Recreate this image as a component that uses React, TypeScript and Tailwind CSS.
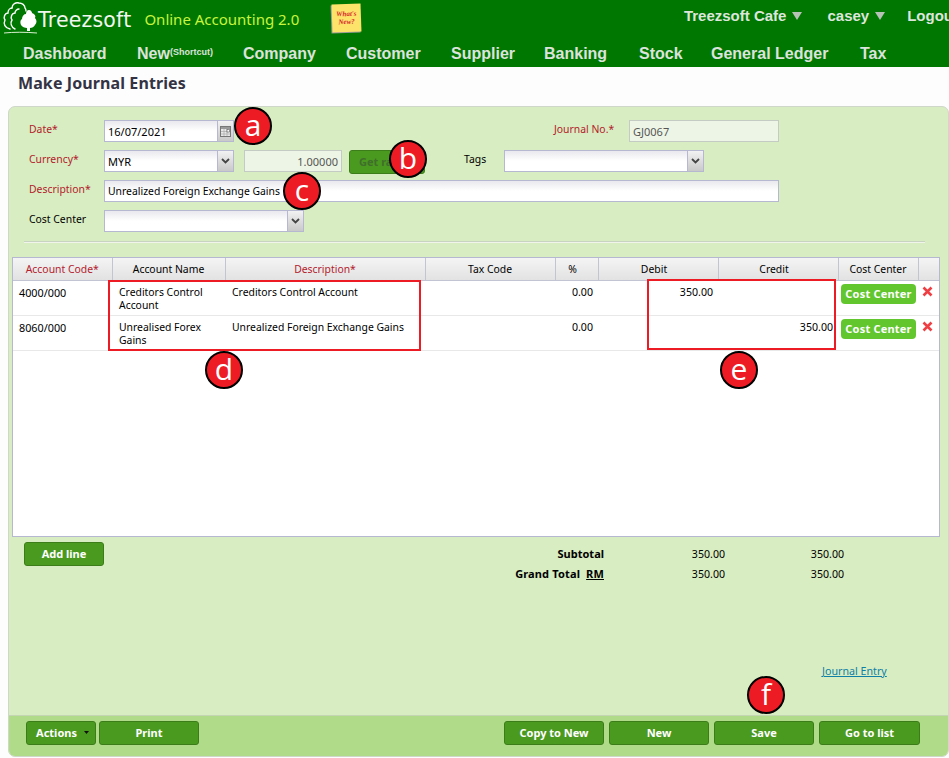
import React from "react";

const ui = "font-['Noto_Sans','Open_Sans',sans-serif]";

function Badge({ ch, className }: { ch: string; className: string }) {
  return (
    <div className={`absolute flex h-[38px] w-[38px] items-center justify-center rounded-full border-2 border-black bg-[#ed1c24] font-['Open_Sans',sans-serif] text-[30px] leading-none text-white ${className}`}>
      <span className="-mt-[3px]">{ch}</span>
    </div>
  );
}

function Input({ w, value, disabled, right, small }: { w: string; value?: string; disabled?: boolean; right?: boolean; small?: boolean }) {
  const base = disabled
    ? "border-[#c4cbc4] bg-[#edf5e6] text-[#555]"
    : "border-[#b5b8d0] bg-gradient-to-b from-[#e9e9ee] via-white to-white text-black";
  return (
    <div className={`flex h-[22px] items-center border px-[3px] ${small ? "pt-[1px] text-[10.4px]" : "text-[11px]"} ${w} ${base} ${right ? "justify-end" : ""}`}>
      {value}
    </div>
  );
}

function Select({ w, value, cal }: { w: string; value?: string; cal?: boolean }) {
  return (
    <div className={`flex h-[22px] border border-[#b5b8d0] bg-gradient-to-b from-[#e9e9ee] via-white to-white text-[11px] text-black ${w}`}>
      <div className="flex flex-1 items-center px-[3px]">{value}</div>
      <div className="flex w-[16px] items-center justify-center border-l border-[#b5b8d0] bg-gradient-to-b from-[#f2f2f2] to-[#c9c9c9]">
        {cal ? (
          <svg width="11" height="11" viewBox="0 0 11 11">
            <rect x="0.5" y="0.5" width="10" height="10" fill="#e8e8e8" stroke="#777" />
            <rect x="1" y="1" width="9" height="2" fill="#999" />
            <path d="M1 5.5h9M1 8h9M4 3v7M7 3v7" stroke="#aaa" strokeWidth="0.7" />
            <rect x="7" y="3.500" width="2.500" height="2.500" fill="#fff" stroke="#555" strokeWidth="0.6" />
          </svg>
        ) : (
          <svg width="9" height="6" viewBox="0 0 9 6">
            <path d="M1 1l3.500 3.500L8 1" fill="none" stroke="#444" strokeWidth="1.8" />
          </svg>
        )}
      </div>
    </div>
  );
}

function Btn({ children, className = "" }: { children: React.ReactNode; className?: string }) {
  return (
    <div className={`flex h-[24px] items-center justify-center rounded-[3px] border border-[#3c7d1a] bg-[#4b9a20] pb-[2px] text-[11px] font-bold text-white ${className}`}>
      {children}
    </div>
  );
}

const nav: [string, string][] = [
  ["Dashboard", "w-[114px]"],
  ["New", "w-[106px]"],
  ["Company", "w-[103px]"],
  ["Customer", "w-[105px]"],
  ["Supplier", "w-[93px]"],
  ["Banking", "w-[95px]"],
  ["Stock", "w-[72px]"],
  ["General Ledger", "w-[149px]"],
  ["Tax", "w-[30px]"],
];

const Th = ({ children, className = "" }: { children?: React.ReactNode; className?: string }) => (
  <th className={`h-[22px] border-r border-b border-[#c2c4d4] bg-gradient-to-b from-[#f4f4f4] to-[#e2e2e2] p-0 pt-[2px] text-center text-[10.4px] font-normal ${className}`}>
    {children}
  </th>
);

function Row({ code, name, desc, debit, credit }: { code: string; name: React.ReactNode; desc: string; debit?: string; credit?: string }) {
  return (
    <tr className="h-[35px] border-b border-[#e8e8e8] align-top">
      <td className="pt-[5px] pl-[6px] text-[10.8px]">{code}</td>
      <td className="pt-[5px] pl-[7px] leading-[13px]">{name}</td>
      <td className="pt-[5px] pl-[7px]">{desc}</td>
      <td></td>
      <td className="pt-[5px] pr-[5px] text-right text-[10.6px]">0.00</td>
      <td className="pt-[5px] pr-[5px] text-right text-[10.6px]">{debit}</td>
      <td className="pt-[5px] pr-[5px] text-right text-[10.6px]">{credit}</td>
      <td className="pt-[3px] pl-[3px]">
        <div className="flex h-[20px] w-[75px] items-center justify-center rounded-[4px] bg-[#62c62e] text-[11px] font-bold tracking-[0.2px] text-white">Cost Center</div>
      </td>
      <td className="pt-[5px] pl-[4px]">
        <svg width="11" height="11" viewBox="0 0 11 11">
          <path d="M1.500 1.500l8 8M9.500 1.500l-8 8" stroke="#ee3f45" strokeWidth="2.6" />
        </svg>
      </td>
    </tr>
  );
}

export default function App() {
  return (
    <div className={`relative h-[758px] w-[949px] overflow-hidden bg-[#fdfdfd] text-[10.4px] leading-[13px] text-black ${ui}`}>
      <header className="h-[67px] bg-[#007700] font-['Liberation_Sans',sans-serif]">
        <div className="flex h-[40px] items-start">
          <svg className="mt-[1px] ml-[2px] shrink-0" width="36" height="34" viewBox="0 0 36 34">
            <g fill="none" stroke="#fff" strokeWidth="1.4" strokeLinecap="round">
              <path d="M8 28C3 27 1 23 3 19 1 16 3 12 6 12 6 9 8 7 10 7" />
              <path d="M10 7C10 3 14 1 17 2 20 2 23 4 23 7 24 8 24 9 24 10" />
              <path d="M13 28C9 26 8 22 10 19 8 16 10 12 13 12 13 10 15 8 17 8" />
            </g>
            <path d="M27 9c2 0 3 2 3 3 3 1 4 3 3 5 2 2 2 5 0 7-1 2-3 3-5 3l0 3h-3l0-3c-2 0-5-1-6-3-1-2-1-5 1-6 0-3 2-5 4-5 0-2 1-4 3-4z" fill="#fff" />
            <path d="M2 32c10-1 21-1 33 0" stroke="#d8f0d0" strokeWidth="1" fill="none" />
          </svg>
          <span className="mt-[8px] font-['DejaVu_Sans',sans-serif] text-[20.5px] leading-[24px] tracking-[0.2px] text-[#f2f6f0]">Treezsoft</span>
          <span className={`mt-[10px] ml-[13px] text-[15px] leading-[18px] text-[#c8f53e] ${ui}`}>Online Accounting 2.0</span>
          <div className="mt-[4px] ml-[33px] flex h-[28px] w-[29px] rotate-[-2deg] items-center justify-center bg-[#fde36a] text-center font-['Liberation_Serif',serif] text-[7px] leading-[8px] font-bold text-[#d8262c] italic shadow-[-1px_1px_0_#999]">
            What's New?
          </div>
          <div className="-mr-[9px] ml-auto flex shrink-0 items-center text-[15px] leading-[17px] font-bold text-[#dde6dd]">
            <div className="mt-[7px] flex items-center gap-[6px]">
              <span>Treezsoft Cafe</span>
              <svg width="10" height="8" viewBox="0 0 10 8"><path d="M0 0h10L5 8z" fill="#b5c2b5" /></svg>
            </div>
            <div className="mt-[7px] ml-[25px] flex items-center gap-[6px]">
              <span>casey</span>
              <svg width="10" height="8" viewBox="0 0 10 8"><path d="M0 0h10L5 8z" fill="#b5c2b5" /></svg>
            </div>
            <span className="mt-[7px] ml-[22px]">Logout</span>
          </div>
        </div>
        <nav className="flex h-[27px] items-center pl-[23px] text-[16px] font-bold text-[#dce3dc]">
          {nav.map(([t, w]) => (
            <div key={t} className={`shrink-0 whitespace-nowrap ${w}`}>
              {t}
              {t === "New" && <sup className="text-[9px] font-bold">(Shortcut)</sup>}
            </div>
          ))}
        </nav>
      </header>

      <h1 className="mt-[7px] ml-[18px] h-[32px] text-[16px] leading-[18px] font-bold tracking-[0.1px] text-[#333344]">Make Journal Entries</h1>

      <main className="ml-[8px] flex h-[651px] w-[941px] flex-col overflow-hidden rounded-[7px] border border-[#cfd6ca] bg-[#d8edc1]">
        <section className="px-[20px] pt-[13px]">
          <div className="flex h-[22px] items-center">
            <label className="w-[75px] pb-[3px] text-[#b3202c]">Date*</label>
            <Select w="w-[130px]" value="16/07/2021" cal />
            <label className="ml-[320px] w-[75px] pb-[3px] text-[#b3202c]">Journal No.*</label>
            <Input w="w-[150px]" value="GJ0067" disabled />
          </div>
          <div className="mt-[8px] flex h-[22px] items-center">
            <label className="w-[75px] pb-[3px] text-[#b3202c]">Currency*</label>
            <Select w="w-[130px]" value="MYR" />
            <div className="ml-[10px]"><Input w="w-[98px]" value="1.00000" disabled right /></div>
            <Btn className="mt-[2px] ml-[7px] w-[76px] !justify-start pl-[9px] !text-[#3f6f2a]">Get rate</Btn>
            <label className="ml-[39px] w-[40px] pb-[3px]">Tags</label>
            <Select w="w-[200px]" />
          </div>
          <div className="mt-[8px] flex h-[22px] items-center">
            <label className="w-[75px] pb-[3px] text-[#b3202c]">Description*</label>
            <Input w="w-[675px]" value="Unrealized Foreign Exchange Gains" small />
          </div>
          <div className="mt-[8px] flex h-[22px] items-center">
            <label className="w-[75px] pb-[3px]">Cost Center</label>
            <Select w="w-[200px]" />
          </div>
          <div className="mt-[10px] mr-[3px] ml-[-5px] h-[1px] bg-[#f0f4ea] shadow-[0_-1px_0_#c9d3c2]" />
        </section>

        <div className="mt-[14px] ml-[3px] h-[280px] w-[928px] shrink-0 overflow-hidden border border-[#b5b8d0] bg-white">
          <table className="w-full table-fixed border-collapse">
            <colgroup>
              <col className="w-[99px]" />
              <col className="w-[113px]" />
              <col className="w-[200px]" />
              <col className="w-[130px]" />
              <col className="w-[43px]" />
              <col className="w-[120px]" />
              <col className="w-[120px]" />
              <col className="w-[80px]" />
              <col className="w-[21px]" />
            </colgroup>
            <thead>
              <tr>
                <Th className="text-[#b3202c]">Account Code*</Th>
                <Th>Account Name</Th>
                <Th className="text-[#b3202c]">Description*</Th>
                <Th>Tax Code</Th>
                <Th className="pr-[8px]">%</Th>
                <Th className="pr-[8px]">Debit</Th>
                <Th className="pr-[8px]">Credit</Th>
                <Th>Cost Center</Th>
                <Th />
              </tr>
            </thead>
            <tbody>
              <Row code="4000/000" name={<>Creditors Control<br />Account</>} desc="Creditors Control Account" debit="350.00" />
              <Row code="8060/000" name={<>Unrealised Forex<br />Gains</>} desc="Unrealized Foreign Exchange Gains" credit="350.00" />
            </tbody>
          </table>
        </div>

        <div className="mt-[5px] flex flex-1 pl-[15px]">
          <Btn className="w-[80px]">Add line</Btn>
          <div className="ml-[420px] w-[320px] text-[10.6px]">
            <div className="mt-[5px] flex h-[13px] items-center">
              <div className="w-[80px] text-right text-[11px] font-bold">Subtotal</div>
              <div className="w-[121px] pt-[1px] text-right">350.00</div>
              <div className="w-[119px] pt-[1px] text-right">350.00</div>
            </div>
            <div className="mt-[7px] flex h-[13px] items-center">
              <div className="ml-[-10px] w-[90px] text-right text-[11px] font-bold tracking-[0.15px] whitespace-nowrap">Grand Total&nbsp; <span className="underline">RM</span></div>
              <div className="w-[121px] pt-[1px] text-right">350.00</div>
              <div className="w-[119px] pt-[1px] text-right">350.00</div>
            </div>
            <div className="mt-[85px] ml-[298px] text-[10.7px] whitespace-nowrap text-[#0f7fa8] underline">Journal Entry</div>
          </div>
        </div>

        <footer className="flex h-[41px] shrink-0 items-start border-t border-[#c3d5b3] bg-[#b0dc8a] pt-[5px] pr-[28px] pl-[17px]">
          <Btn className="w-[70px] gap-[7px] pl-[3px]">
            Actions
            <svg width="5" height="3" viewBox="0 0 5 3"><path d="M0 0h5L2.500 3z" fill="#111" /></svg>
          </Btn>
          <Btn className="ml-[3px] w-[100px]">Print</Btn>
          <div className="ml-auto flex gap-[5px]">
            <Btn className="w-[100px]">Copy to New</Btn>
            <Btn className="w-[100px]">New</Btn>
            <Btn className="w-[100px]">Save</Btn>
            <Btn className="w-[101px]">Go to list</Btn>
          </div>
        </footer>
      </main>

      <div className="pointer-events-none absolute top-[280px] left-[108px] h-[71px] w-[313px] border-2 border-[#ed1c24]" />
      <div className="pointer-events-none absolute top-[279px] left-[647px] h-[71px] w-[189px] border-2 border-[#ed1c24]" />
      <Badge ch="a" className="top-[107px] left-[234px]" />
      <Badge ch="b" className="top-[140px] left-[389px]" />
      <Badge ch="c" className="top-[172px] left-[283px]" />
      <Badge ch="d" className="top-[351px] left-[205px]" />
      <Badge ch="e" className="top-[351px] left-[720px]" />
      <Badge ch="f" className="top-[676px] left-[747px]" />
    </div>
  );
}
